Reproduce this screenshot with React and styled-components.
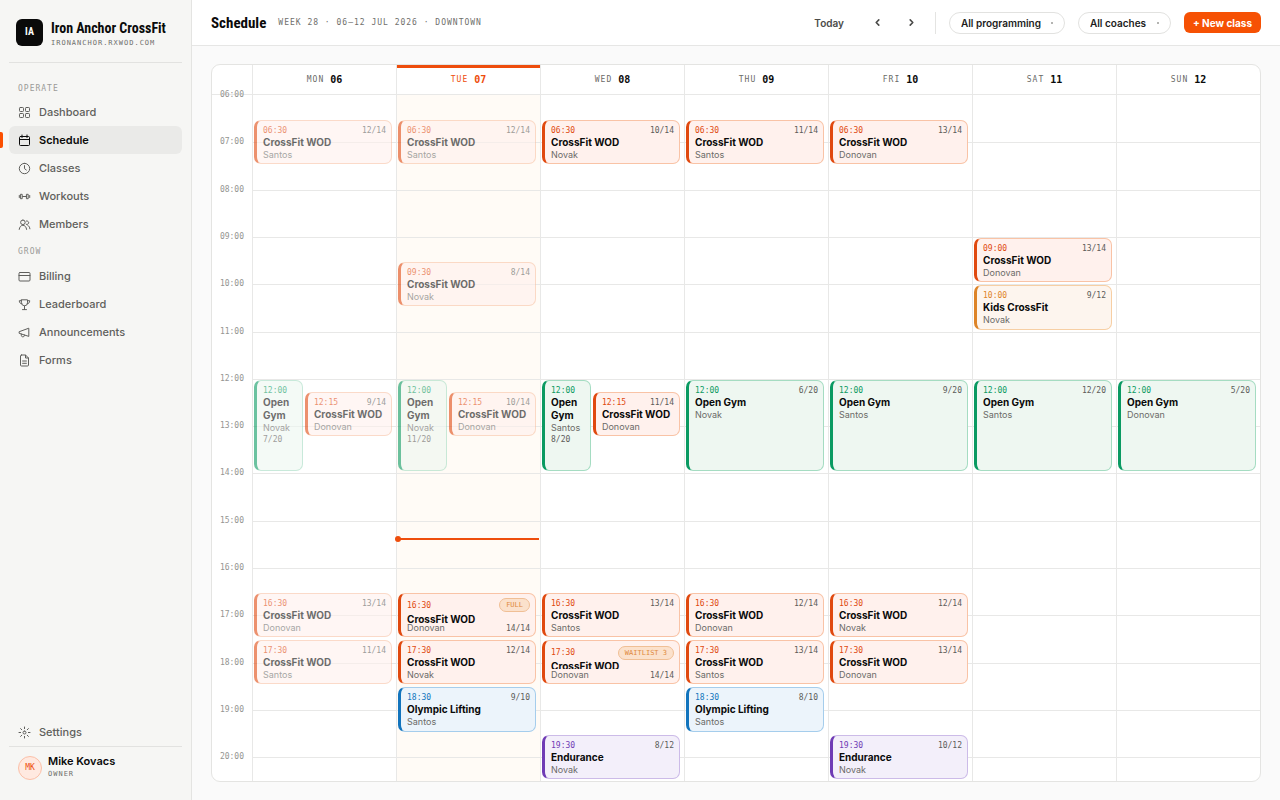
import React from "react";
import styled, { createGlobalStyle, css } from "styled-components";

const sans = `Inter, "Liberation Sans", sans-serif`;
const narrow = `"Liberation Sans Narrow", "Roboto Condensed", Roboto, sans-serif`;
const mono = `"DejaVu Sans Mono", "Liberation Mono", monospace`;

const tones = {
  wod: { main: "#e0490f", bg: "#fff1ed", line: "#f9c3a6" },
  gym: { main: "#0a9a62", bg: "#eef7f1", line: "#a5dcc2" },
  kids: { main: "#dd8428", bg: "#fdf5ee", line: "#f7cfa4" },
  lift: { main: "#1274bd", bg: "#ecf4fb", line: "#a5cdec" },
  endurance: { main: "#6f3bb5", bg: "#f3effa", line: "#ccbbe8" },
};

const FIRST_HOUR = 6;
const QUARTERS = 58;
const HOURS = Array.from({ length: 15 }, (_, i) => FIRST_HOUR + i);

const toQuarter = (time) => {
  const [h, m] = time.split(":").map(Number);
  return (h - FIRST_HOUR) * 4 + m / 15 + 1;
};

const wod = (time, coach, count, extra) => ({ tone: "wod", title: "CrossFit WOD", time, coach, count, span: 4, ...extra });
const gym = (coach, count, extra) => ({ tone: "gym", title: "Open Gym", time: "12:00", coach, count, span: 8, ...extra });
const lift = (coach, count) => ({ tone: "lift", title: "Olympic Lifting", time: "18:30", coach, count, span: 4 });
const endurance = (coach, count) => ({ tone: "endurance", title: "Endurance", time: "19:30", coach, count, span: 4 });

const week = [
  {
    name: "MON", date: "06",
    events: [
      wod("06:30", "Santos", "12/14", { past: true }),
      gym("Novak", "7/20", { past: true, lane: 1 }),
      wod("12:15", "Donovan", "9/14", { past: true, lane: 2 }),
      wod("16:30", "Donovan", "13/14", { past: true }),
      wod("17:30", "Santos", "11/14", { past: true }),
    ],
  },
  {
    name: "TUE", date: "07", today: true,
    events: [
      wod("06:30", "Santos", "12/14", { past: true }),
      wod("09:30", "Novak", "8/14", { past: true }),
      gym("Novak", "11/20", { past: true, lane: 1 }),
      wod("12:15", "Donovan", "10/14", { past: true, lane: 2 }),
      wod("16:30", "Donovan", "14/14", { flag: "FULL" }),
      wod("17:30", "Novak", "12/14"),
      lift("Santos", "9/10"),
    ],
  },
  {
    name: "WED", date: "08",
    events: [
      wod("06:30", "Novak", "10/14"),
      gym("Santos", "8/20", { lane: 1 }),
      wod("12:15", "Donovan", "11/14", { lane: 2 }),
      wod("16:30", "Santos", "13/14"),
      wod("17:30", "Donovan", "14/14", { flag: "WAITLIST 3", clip: true }),
      endurance("Novak", "8/12"),
    ],
  },
  {
    name: "THU", date: "09",
    events: [
      wod("06:30", "Santos", "11/14"),
      gym("Novak", "6/20"),
      wod("16:30", "Donovan", "12/14"),
      wod("17:30", "Santos", "13/14"),
      lift("Santos", "8/10"),
    ],
  },
  {
    name: "FRI", date: "10",
    events: [
      wod("06:30", "Donovan", "13/14"),
      gym("Santos", "9/20"),
      wod("16:30", "Novak", "12/14"),
      wod("17:30", "Donovan", "13/14"),
      endurance("Novak", "10/12"),
    ],
  },
  {
    name: "SAT", date: "11",
    events: [
      wod("09:00", "Donovan", "13/14"),
      { tone: "kids", title: "Kids CrossFit", time: "10:00", coach: "Novak", count: "9/12", span: 4 },
      gym("Santos", "12/20"),
    ],
  },
  { name: "SUN", date: "12", events: [gym("Donovan", "5/20")] },
];

const GlobalStyle = createGlobalStyle`
  *, *::before, *::after { box-sizing: border-box; }
  body { margin: 0; background: #fafafa; color: #0a0a0a; font-family: ${sans}; }
  h1, h2, h3 { margin: 0; }
  button, select { font: inherit; color: inherit; margin: 0; }
`;

const Shell = styled.div`
  display: grid;
  grid-template-columns: 192px minmax(0, 1fr);
  min-height: 100vh;
`;

/* Sidebar */

const Sidebar = styled.aside`
  display: flex;
  flex-direction: column;
  padding: 0 9px;
  background: #f6f6f4;
  border-right: 1px solid #e4e4e2;
`;

const Brand = styled.div`
  display: flex;
  align-items: center;
  gap: 8px;
  height: 63px;
  padding: 2px 7px 0;
  border-bottom: 1px solid #e2e2e0;
`;

const BrandMark = styled.div`
  display: grid;
  place-items: center;
  width: 27px;
  height: 27px;
  border-radius: 6px;
  background: #0a0a0a;
  color: #fff;
  font: 700 10px/1 ${narrow};
`;

const BrandText = styled.div`
  padding-top: 3px;
`;

const BrandName = styled.div`
  font: 700 14px/18px ${narrow};
  white-space: nowrap;
`;

const MonoLabel = styled.div`
  font: 400 ${(p) => p.$size || 8}px/12px ${mono};
  letter-spacing: 1px;
  color: #6f6f6c;
  white-space: nowrap;
`;

const NavSection = styled.nav`
  display: flex;
  flex-direction: column;
`;

const NavHeading = styled.h2`
  padding: ${(p) => (p.$first ? "20px 9px 3px" : "8px 9px 4px")};
  font: 400 8px/12px ${mono};
  letter-spacing: 1px;
  color: #9b9b98;
`;

const NavLink = styled.a`
  position: relative;
  display: flex;
  align-items: center;
  gap: 8px;
  height: 28px;
  padding: 0 9px;
  border-radius: 6px;
  background: ${(p) => (p.$active ? "#eaeae8" : "transparent")};
  color: ${(p) => (p.$active ? "#0a0a0a" : "#5f5f5c")};
  font-size: 11px;
  font-weight: ${(p) => (p.$active ? 600 : 500)};
  line-height: 16px;
  text-decoration: none;

  ${(p) => p.$active && css`
    &::before {
      content: "";
      position: absolute;
      left: -9px;
      top: 6px;
      width: 3px;
      height: 16px;
      border-radius: 0 2px 2px 0;
      background: #fb4f00;
    }
  `}
`;

const SidebarFoot = styled.div`
  margin-top: auto;
`;

const Account = styled.div`
  display: flex;
  align-items: center;
  gap: 6px;
  height: 54px;
  padding: 0 9px 12px;
  border-top: 1px solid #e2e2e0;
`;

const Avatar = styled.div`
  display: grid;
  place-items: center;
  width: 24px;
  height: 24px;
  border: 1px solid #fbc0a8;
  border-radius: 50%;
  background: #ffe9e0;
  color: #ee4d0c;
  font: 400 8px/1 ${mono};
`;

const AccountName = styled.div`
  font-size: 11px;
  font-weight: 600;
  line-height: 13px;
`;

/* Header */

const Main = styled.main`
  display: flex;
  flex-direction: column;
  min-width: 0;
`;

const Topbar = styled.header`
  display: flex;
  align-items: center;
  gap: 12px;
  height: 46px;
  padding: 0 19px;
  background: #fff;
  border-bottom: 1px solid #e6e6e5;
`;

const PageTitle = styled.h1`
  font: 700 15px/20px ${narrow};
`;

const Actions = styled.div`
  display: flex;
  align-items: center;
  gap: 13px;
  margin-left: auto;
`;

const GhostButton = styled.button`
  display: grid;
  place-items: center;
  height: 22px;
  min-width: 21px;
  padding: 0 ${(p) => (p.$text ? 10 : 0)}px;
  border: 0;
  background: none;
  color: #4b4b49;
  font-size: 10px;
  font-weight: 600;
`;

const WeekControls = styled.div`
  display: flex;
  align-items: center;
  gap: 13px;
  padding-right: 13px;
  border-right: 1px solid #e4e4e2;
`;

const FilterPill = styled.label`
  display: flex;
  align-items: center;
  gap: 10px;
  height: 22px;
  padding: 0 11px;
  border: 1px solid #e2e2e0;
  border-radius: 11px;
  background: #fff;
  color: #1c1c1b;

  &::after {
    content: "";
    width: 2px;
    height: 2px;
    border-radius: 50%;
    background: #9b9b98;
  }
`;

const FilterSelect = styled.select`
  appearance: none;
  padding: 0;
  border: 0;
  background: none;
  font-size: 10px;
  font-weight: 600;
  line-height: 14px;
`;

const PrimaryButton = styled.button`
  height: 21px;
  padding: 0 9px;
  border: 0;
  border-radius: 6px;
  background: #f65104;
  color: #fff;
  font-size: 10px;
  font-weight: 700;
  line-height: 14px;
`;

/* Calendar */

const Board = styled.section`
  flex: 1;
  display: grid;
  grid-template-columns: 40px repeat(7, minmax(0, 1fr));
  grid-template-rows: 30px minmax(580px, 1fr);
  margin: 18px 19px;
  border: 1px solid #e4e4e2;
  border-radius: 9px;
  background: #fff;
`;

const Corner = styled.div`
  border-bottom: 1px solid #e8e8e7;
`;

const DayHead = styled.h2`
  display: flex;
  align-items: center;
  justify-content: center;
  gap: 6px;
  border-left: 1px solid #e8e8e7;
  border-bottom: 1px solid #e8e8e7;
  box-shadow: ${(p) => (p.$today ? "inset 0 3px #ee4d0c" : "none")};
  color: ${(p) => (p.$today ? "#ee4d0c" : "#6b6b68")};
  font: 400 8px/12px ${mono};
  letter-spacing: 1px;
`;

const DayNumber = styled.span`
  color: ${(p) => (p.$today ? "#ee4d0c" : "#0a0a0a")};
  font-size: 10px;
  font-weight: 700;
  letter-spacing: 0;
`;

const quarterRows = css`
  display: grid;
  grid-template-rows: repeat(${QUARTERS}, minmax(0, 1fr));
`;

const Gutter = styled.div`
  ${quarterRows}
`;

const HourLabel = styled.time`
  grid-row: ${(p) => p.$row};
  height: 12px;
  margin-top: -6px;
  padding-right: 8px;
  text-align: right;
  font: 400 8px/12px ${mono};
  color: #949491;
`;

const DayColumn = styled.div`
  ${quarterRows}
  position: relative;
  grid-template-columns: 1px minmax(0, 9fr) 2px minmax(0, 16fr) 4px;
  border-left: 1px solid #e8e8e7;
  background: ${(p) => (p.$today ? "#fffbf6" : "transparent")};
`;

const HourLine = styled.div`
  grid-row: ${(p) => p.$row};
  grid-column: 1 / -1;
  border-top: 1px solid #e8e8e7;
`;

const laneColumns = { 1: "2 / 3", 2: "4 / 5" };

/* Zero base height keeps the text from stretching the quarter-hour rows. */
const EventCard = styled.article`
  grid-row: ${(p) => p.$row} / span ${(p) => p.$span};
  grid-column: ${(p) => laneColumns[p.$lane] || "2 / 5"};
  display: flex;
  flex-direction: column;
  min-width: 0;
  height: 0;
  min-height: calc(100% - 3px);
  margin: 1px 0 2px;
  padding: 4px 5px 2px 6px;
  border: 1px solid ${(p) => tones[p.$tone].line};
  border-left: 3px solid ${(p) => tones[p.$tone].main};
  border-radius: 7px;
  background: ${(p) => tones[p.$tone].bg};
  opacity: ${(p) => (p.$past ? 0.6 : 1)};
`;

const EventRow = styled.div`
  display: flex;
  flex: none;
  align-items: center;
  justify-content: space-between;
  min-height: ${(p) => p.$height}px;
`;

const EventTime = styled.time`
  font: 400 8px/11px ${mono};
  color: ${(p) => tones[p.$tone].main};
`;

const EventCount = styled.span`
  font: 400 8px/11px ${mono};
  color: #5c5c59;
`;

const EventTitle = styled.h3`
  flex: 0 1 auto;
  min-height: 0;
  overflow: ${(p) => (p.$clip ? "hidden" : "visible")};
  font-size: 10px;
  font-weight: 700;
  line-height: 13px;
`;

const EventCoach = styled.span`
  font-size: 9px;
  line-height: 12px;
  color: #6b6b68;
`;

const Flag = styled.span`
  padding: 0 6px;
  border: 1px solid #f0bf95;
  border-radius: 7px;
  background: #fbe1cc;
  color: #e08a3c;
  font: 400 7px/12px ${mono};
`;

const NowLine = styled.div`
  position: absolute;
  left: 1px;
  right: 1px;
  top: ${(p) => p.$at}%;
  height: 2px;
  background: #ee4d0c;

  &::before {
    content: "";
    position: absolute;
    left: -3px;
    top: -2px;
    width: 6px;
    height: 6px;
    border-radius: 50%;
    background: #ee4d0c;
  }
`;

const IconSvg = styled.svg`
  flex: none;
  width: 13px;
  height: 13px;
  fill: none;
  stroke: currentColor;
  stroke-width: 1;
  stroke-linecap: round;
  stroke-linejoin: round;
`;

const icons = {
  dashboard: (
    <>
      <rect x="1.5" y="1.5" width="4" height="4" rx="0.8" />
      <rect x="7.5" y="1.5" width="4" height="4" rx="0.8" />
      <rect x="1.5" y="7.5" width="4" height="4" rx="0.8" />
      <rect x="7.5" y="7.5" width="4" height="4" rx="0.8" />
    </>
  ),
  calendar: <path d="M2.5 2.5h8a1 1 0 0 1 1 1v7a1 1 0 0 1-1 1h-8a1 1 0 0 1-1-1v-7a1 1 0 0 1 1-1zM1.5 5.5h10M4 1v2.5M9 1v2.5" />,
  clock: <path d="M6.5 1.3a5.2 5.2 0 1 0 0 10.4a5.2 5.2 0 1 0 0-10.4M6.5 3.6v3l1.8 1.4" />,
  dumbbell: <path d="M4.6 6.5h3.8M1.3 5.5v2M2.800 4.300h1.400v4.400H2.800zM8.800 4.300h1.400v4.400H8.800zM11.700 5.500v2" />,
  members: <path d="M4.900 2a2.300 2.300 0 1 0 0 4.600a2.300 2.300 0 1 0 0-4.600M1.200 11.400c.3-2.500 1.800-4.100 3.700-4.100s3.400 1.600 3.700 4.100M8.300 6.400a1.800 1.800 0 1 0 0-3.400M9.800 7.400c1.200.5 1.900 1.800 2.100 3.400" />,
  billing: <path d="M2 2.500h9a1 1 0 0 1 1 1v6.500a1 1 0 0 1-1 1H2a1 1 0 0 1-1-1V3.500a1 1 0 0 1 1-1zM1 5.500h11" />,
  trophy: <path d="M3.500 1.800h6v3a3 3 0 0 1-6 0zM3.500 2.700h-2.200c0 1.900.9 2.900 2.400 3.100M9.500 2.700h2.200c0 1.900-.9 2.900-2.400 3.100M6.500 8v3.500M4.500 11.600h4" />,
  megaphone: <path d="M1.500 5.600L10.800 2.200v8.200L1.500 7.400zM3.300 8v1.400a1.600 1.600 0 0 0 3.100.4V9" />,
  form: <path d="M3.500 1h4l3 3v7a1 1 0 0 1-1 1h-6a1 1 0 0 1-1-1V2a1 1 0 0 1 1-1zM7.500 1.200V4h2.800M4.600 7h3.800M4.600 9.300h3.800" />,
  settings: <path d="M6.500 5a1.500 1.500 0 1 0 0 3a1.500 1.500 0 1 0 0-3M6.500 1v1.600M6.500 10.400V12M1 6.500h1.600M10.400 6.500H12M2.600 2.600l1.200 1.200M9.200 9.200l1.200 1.200M10.400 2.600L9.200 3.800M3.800 9.200l-1.200 1.200" />,
  left: <path d="M7.800 3.900L5.200 6.500l2.600 2.600" strokeWidth="1.600" />,
  right: <path d="M5.200 3.900l2.600 2.600l-2.600 2.600" strokeWidth="1.600" />,
};

const Icon = ({ name }) => (
  <IconSvg viewBox="0 0 13 13" aria-hidden="true">{icons[name]}</IconSvg>
);

const NavItem = ({ icon, label, active }) => (
  <NavLink href={`#${label.toLowerCase()}`} $active={active} aria-current={active ? "page" : undefined}>
    <Icon name={icon} />
    {label}
  </NavLink>
);

const ClassEvent = ({ tone, title, time, coach, count, span, lane, past, flag, clip }) => {
  const countBelow = lane === 1;
  const countInFoot = Boolean(flag);
  return (
    <EventCard $tone={tone} $row={toQuarter(time)} $span={span} $lane={lane} $past={past}>
      <EventRow $height={flag ? 15 : 11}>
        <EventTime $tone={tone}>{time}</EventTime>
        {flag && <Flag>{flag}</Flag>}
        {!countBelow && !countInFoot && <EventCount>{count}</EventCount>}
      </EventRow>
      <EventTitle $clip={clip}>{title}</EventTitle>
      <EventRow $height={12}>
        <EventCoach>{coach}</EventCoach>
        {countInFoot && <EventCount>{count}</EventCount>}
      </EventRow>
      {countBelow && <EventCount>{count}</EventCount>}
    </EventCard>
  );
};

const pad = (h) => `${String(h).padStart(2, "0")}:00`;
const NOW = ((15 + 22 / 60 - FIRST_HOUR) / (QUARTERS / 4)) * 100;

export default function App() {
  return (
    <>
      <GlobalStyle />
      <Shell>
        <Sidebar>
          <Brand>
            <BrandMark>IA</BrandMark>
            <BrandText>
              <BrandName>Iron Anchor CrossFit</BrandName>
              <MonoLabel $size={7}>IRONANCHOR.RXWOD.COM</MonoLabel>
            </BrandText>
          </Brand>
          <NavSection aria-label="Operate">
            <NavHeading $first>OPERATE</NavHeading>
            <NavItem icon="dashboard" label="Dashboard" />
            <NavItem icon="calendar" label="Schedule" active />
            <NavItem icon="clock" label="Classes" />
            <NavItem icon="dumbbell" label="Workouts" />
            <NavItem icon="members" label="Members" />
          </NavSection>
          <NavSection aria-label="Grow">
            <NavHeading>GROW</NavHeading>
            <NavItem icon="billing" label="Billing" />
            <NavItem icon="trophy" label="Leaderboard" />
            <NavItem icon="megaphone" label="Announcements" />
            <NavItem icon="form" label="Forms" />
          </NavSection>
          <SidebarFoot>
            <NavItem icon="settings" label="Settings" />
            <Account>
              <Avatar>MK</Avatar>
              <div>
                <AccountName>Mike Kovacs</AccountName>
                <MonoLabel $size={7}>OWNER</MonoLabel>
              </div>
            </Account>
          </SidebarFoot>
        </Sidebar>
        <Main>
          <Topbar>
            <PageTitle>Schedule</PageTitle>
            <MonoLabel>WEEK 28 · 06–12 JUL 2026 · DOWNTOWN</MonoLabel>
            <Actions>
              <WeekControls>
                <GhostButton type="button" $text>Today</GhostButton>
                <GhostButton type="button" aria-label="Previous week"><Icon name="left" /></GhostButton>
                <GhostButton type="button" aria-label="Next week"><Icon name="right" /></GhostButton>
              </WeekControls>
              <FilterPill>
                <FilterSelect aria-label="Programming"><option>All programming</option></FilterSelect>
              </FilterPill>
              <FilterPill>
                <FilterSelect aria-label="Coaches"><option>All coaches</option></FilterSelect>
              </FilterPill>
              <PrimaryButton type="button">+ New class</PrimaryButton>
            </Actions>
          </Topbar>
          <Board aria-label="Week schedule">
            <Corner />
            {week.map((day) => (
              <DayHead key={day.name} $today={day.today}>
                {day.name}
                <DayNumber $today={day.today}>{day.date}</DayNumber>
              </DayHead>
            ))}
            <Gutter>
              {HOURS.map((h) => (
                <HourLabel key={h} $row={toQuarter(pad(h))}>{pad(h)}</HourLabel>
              ))}
            </Gutter>
            {week.map((day) => (
              <DayColumn key={day.name} $today={day.today}>
                {HOURS.slice(1).map((h) => (
                  <HourLine key={h} $row={toQuarter(pad(h))} />
                ))}
                {day.events.map((event) => (
                  <ClassEvent key={event.time} {...event} />
                ))}
                {day.today && <NowLine $at={NOW} />}
              </DayColumn>
            ))}
          </Board>
        </Main>
      </Shell>
    </>
  );
}
